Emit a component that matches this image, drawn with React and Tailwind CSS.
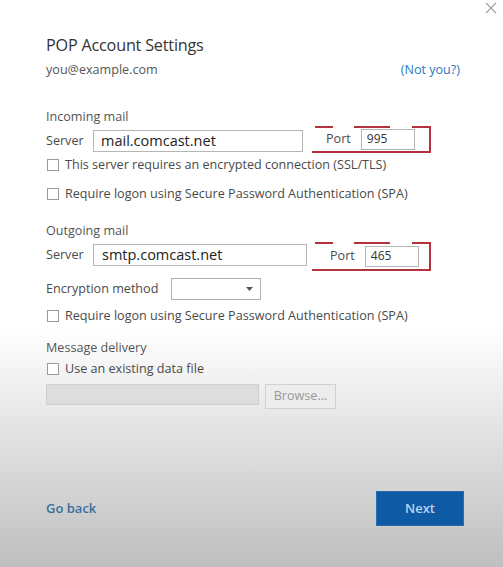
import React from "react";

function Check({ children }) {
  return (
    <div className="flex items-center h-full">
      <span className="w-[12px] h-[12px] border border-[#9a9a9a] bg-white ml-[1px] shrink-0" />
      <span className="ml-[6px] text-[#4a4a4a] text-[12.6px]">{children}</span>
    </div>
  );
}

function PortGroup({ labelMl, inputMl, value }) {
  return (
    <div className="relative w-[119px] h-full flex items-center">
      <span className={`text-[12.6px] text-[#4a4a4a] ${labelMl}`}>Port</span>
      <div className={`${inputMl} w-[54px] h-[21px] border border-[#b5b5b5] bg-white flex items-center pl-[5px] text-[12px] text-[#333]`}>
        {value}
      </div>
      <span className="absolute top-0 left-[3px] w-[18px] h-[2px] bg-[#b4323e]" />
      <span className="absolute top-0 left-[42px] w-[36px] h-[2px] bg-[#b4323e]" />
      <span className="absolute top-0 left-[100px] w-[19px] h-[2px] bg-[#b4323e]" />
      <span className="absolute top-0 right-0 w-[2px] bottom-[-1px] bg-[#b4323e]" />
      <span className="absolute bottom-[-1px] left-0 right-0 h-[2px] bg-[#b4323e]" />
    </div>
  );
}

export default function App() {
  return (
    <div
      className="w-[503px] h-[567px] flex flex-col bg-linear-to-b from-white via-white via-[58%] to-[#bfbfbf] overflow-hidden"
      style={{ fontFamily: '"Open Sans", "Noto Sans", sans-serif' }}
    >
      <div className="h-[33px] flex justify-end items-start pt-[2px] pr-[6px]">
        <svg width="12" height="12" viewBox="0 0 12 12">
          <path d="M1 1 L11 11 M11 1 L1 11" stroke="#a0a0a0" strokeWidth="1.1" />
        </svg>
      </div>
      <div className="px-[46px] flex flex-col">
        <div className="h-[24px] flex items-center text-[16.2px] text-[#333] tracking-[-0.2px]">
          POP Account Settings
        </div>
        <div className="mt-[1px] h-[24px] flex items-center justify-between text-[12.6px]">
          <span className="text-[#555]">you@example.com</span>
          <span className="text-[#2a78c0] mr-[-3px]">(Not you?)</span>
        </div>

        <div className="mt-[23px] h-[24px] flex items-center text-[12.6px] text-[#555]">Incoming mail</div>
        <div className="h-[24px] flex items-center">
          <span className="w-[47px] text-[12.6px] text-[#4a4a4a]">Server</span>
          <div className="w-[210px] h-[22px] border border-[#b5b5b5] bg-white flex items-center pl-[7px] text-[14.5px] text-[#222]">
            mail.comcast.net
          </div>
          <div className="ml-[9px] h-[26px] self-start mt-[-3px]">
            <PortGroup labelMl="ml-[14px]" inputMl="ml-[10px]" value="995" />
          </div>
        </div>
        <div className="h-[24px]">
          <Check>This server requires an encrypted connection (SSL/TLS)</Check>
        </div>
        <div className="mt-[5px] h-[24px]">
          <Check>Require logon using Secure Password Authentication (SPA)</Check>
        </div>

        <div className="mt-[13px] h-[24px] flex items-center text-[12.6px] text-[#555]">Outgoing mail</div>
        <div className="h-[24px] flex items-center">
          <span className="w-[47px] text-[12.6px] text-[#4a4a4a]">Server</span>
          <div className="w-[214px] h-[22px] border border-[#b5b5b5] bg-white flex items-center pl-[8px] text-[14.5px] text-[#222]">
            smtp.comcast.net
          </div>
          <div className="ml-[5px] h-[28px] self-start mt-[-1px]">
            <PortGroup labelMl="ml-[18px]" inputMl="ml-[10px]" value="465" />
          </div>
        </div>

        <div className="mt-[10px] h-[24px] flex items-center">
          <span className="w-[125px] text-[12.6px] text-[#4a4a4a]">Encryption method</span>
          <div className="w-[90px] h-[22px] border border-[#b0b0b0] bg-white flex items-center justify-end pr-[7px]">
            <svg width="7" height="4" viewBox="0 0 7 4">
              <path d="M0 0 L7 0 L3.5 4 Z" fill="#555" />
            </svg>
          </div>
        </div>
        <div className="mt-[3px] h-[24px]">
          <Check>Require logon using Secure Password Authentication (SPA)</Check>
        </div>

        <div className="mt-[8px] h-[24px] flex items-center text-[12.6px] text-[#555]">Message delivery</div>
        <div className="h-[18px]">
          <Check>Use an existing data file</Check>
        </div>
        <div className="mt-[6px] flex items-start">
          <div className="w-[213px] h-[21px] border border-[#cfcfcf] bg-[#dddddd]" />
          <div className="ml-[6px] w-[71px] h-[25px] border border-[#d0d0d0] bg-[#ececec] flex items-center justify-center text-[12.6px] text-[#9a9a9a]">
            Browse...
          </div>
        </div>
      </div>

      <div className="flex-1" />
      <div className="px-[46px] pb-[41px] flex items-center justify-between">
        <span className="text-[13px] font-semibold text-[#3a6f9c]">Go back</span>
        <div className="mr-[-7px] w-[88px] h-[35px] bg-[#0f5aa5] border border-[#2a6cb0] flex items-center justify-center text-[13px] font-semibold text-[#bcd4ec]">
          Next
        </div>
      </div>
    </div>
  );
}
